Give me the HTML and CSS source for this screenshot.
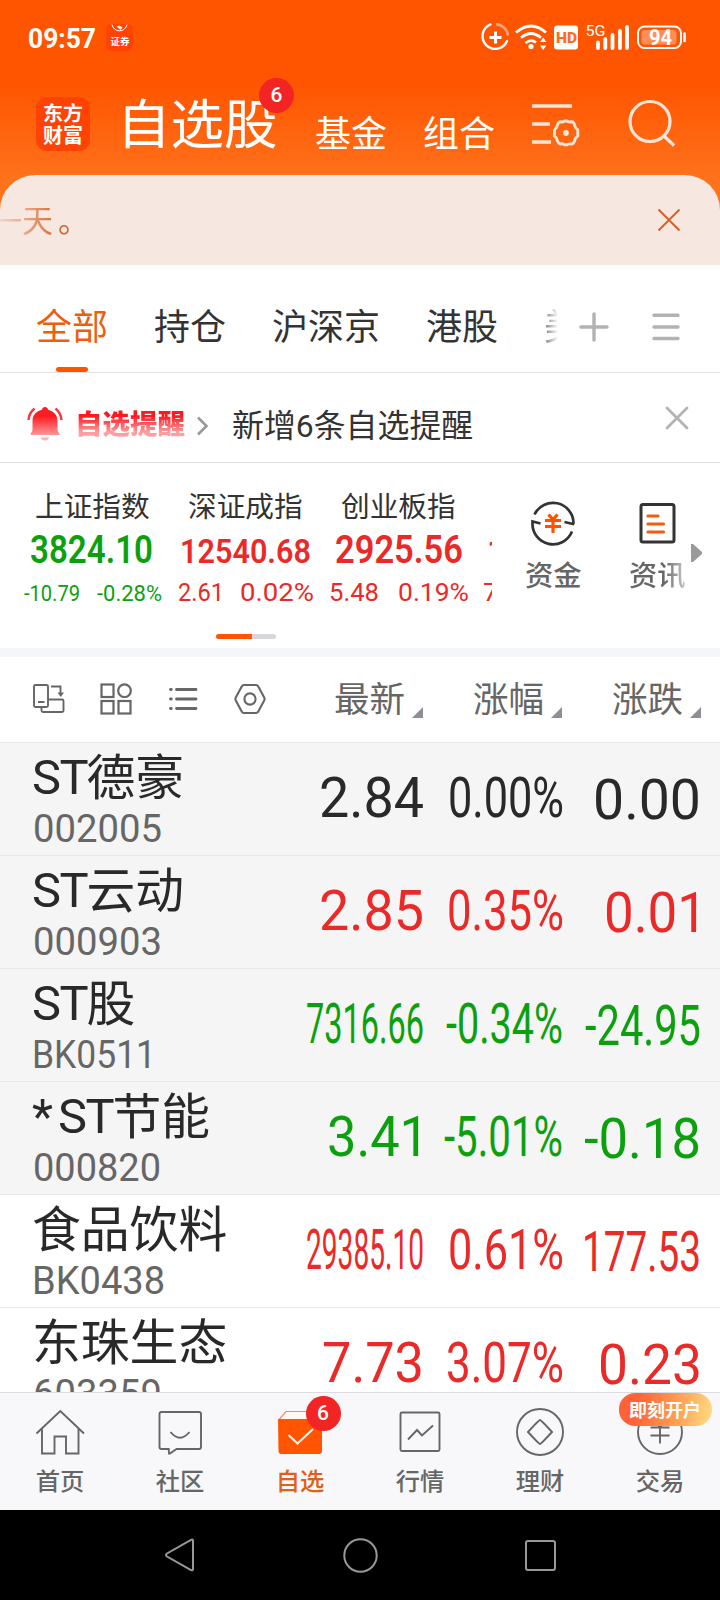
FILE: index.html
```html
<!DOCTYPE html>
<html lang="zh-CN">
<head>
<meta charset="utf-8">
<title>自选股</title>
<link rel="stylesheet" href="styles.css">
</head>
<body>
<div class="phone">
  <header class="top">
    <div class="status">
      <svg class="clock" width="70" height="28"><text x="0" y="24" textLength="68" lengthAdjust="spacingAndGlyphs">09:57</text></svg>
      <svg class="app-note" width="28" height="28" viewBox="0 0 28 28"><rect width="27" height="27" rx="5.5" fill="#ff4305"/><path d="M6 0.5a7.6 7.6 0 0 0 15 0" fill="none" stroke="#fff" stroke-width="1"/><path d="M10.5 2.5l3-1 3 2-2 2.5z" fill="#ffe7df"/><text x="4.5" y="20.800" font-size="9.5">证券</text></svg>
      <svg class="sys" width="210" height="32" viewBox="0 0 210 32" fill="none" stroke="#fff">
        <path d="M10.5 2.4A12.7 12.7 0 1 0 27 19" stroke-width="2.4" stroke-linecap="round"/>
        <path d="M16 2.2A12.700 12.700 0 0 1 28 13.500" stroke="#ffa780" stroke-width="2.4"/>
        <path d="M15.500 9.500v12M9.500 15.500h12" stroke-width="3"/>
        <path d="M36 10.500q15-13 30 0M41 15.800q10-8.500 20 0M45.500 21q5.500-4.500 10.500-.5" stroke-width="2.8"/>
        <circle cx="51" cy="24.500" r="2.6" fill="#fff" stroke="none"/>
        <path d="M60 20l3.200-4.500 3.200 4.500zM60 23.500h6.400l-3.200 4.500z" fill="#fff" stroke="none"/>
        <rect x="74" y="3.500" width="24" height="24" rx="3" fill="#fff" stroke="none"/>
        <text x="76" y="20.500" class="hd" textLength="21" lengthAdjust="spacingAndGlyphs">HD</text>
        <text x="105.500" y="13.500" class="five" textLength="20" lengthAdjust="spacingAndGlyphs">5G</text>
        <path d="M118 20.500v5.500M125.300 17v9M132.500 13v13M140 9v17M147 5v21" stroke-width="3.800" stroke-linecap="round"/>
        <rect x="158" y="4.500" width="43" height="21.500" rx="6.500" stroke-width="2"/>
        <rect x="161.500" y="8" width="35" height="14.500" rx="3" fill="#ff8d57" stroke="none"/>
        <path d="M204.500 11.500v7.500" stroke-width="2.600" stroke-linecap="round"/>
        <text x="169" y="22.500" class="bat" textLength="23" lengthAdjust="spacingAndGlyphs">94</text>
      </svg>
    </div>
    <div class="head">
      <div class="logo"><span>东方</span><span>财富</span></div>
      <h1 class="title">自选股<b class="badge">6</b></h1>
      <a class="link fund">基金</a>
      <a class="link group">组合</a>
      <svg class="manage" width="48" height="44" viewBox="0 0 48 44" fill="none" stroke="#ffe5d6"><path d="M0 3h40M0 21h18M0 39h19" stroke-width="3.400"/><path d="M28.500 18.800q3 .5 3.800-.8h3q.8 1.300 4.500.8 2 0 3 3.800 0 2.200 3 4.400v6q-3 2-3 4.400-1 3.300-3 3.600-3.700-.6-4.500.8h-3q-.8-1.400-3.800-.8-2.200-.3-3.300-3.600 0-2.400-2.700-4.400v-6q2.700-2.200 2.700-4.400 1.100-3.800 3.300-3.800z" stroke-width="2.900" stroke-linejoin="round"/><circle cx="34" cy="30" r="2.900" fill="#ffe5d6" stroke="none"/></svg>
      <svg class="search" width="48" height="50" viewBox="0 0 48 50" fill="none" stroke="#ffe5d6" stroke-width="3.200"><circle cx="22" cy="22.500" r="20"/><path d="M36 37l10 9.500"/></svg>
    </div>
  </header>

  <section class="notice">
    <p class="notice-text">一天<span>。</span></p>
    <svg width="24" height="24" viewBox="0 0 24 24" stroke="#d9602a" stroke-width="2"><path d="M1.500 1.500l21 21M22.500 1.500l-21 21"/></svg>
  </section>

  <nav class="tabs">
    <a class="tab on">全部</a><a class="tab">持仓</a><a class="tab">沪深京</a><a class="tab">港股</a><a class="tab cut">美股</a>
    <svg class="plus" width="30" height="30" viewBox="0 0 30 30" stroke="#b2b2b2" stroke-width="3.400" stroke-linecap="round"><path d="M15 2v26M2 15h26"/></svg>
    <svg class="menu" width="28" height="30" viewBox="0 0 28 30" stroke="#b2b2b2" stroke-width="3.400" stroke-linecap="round"><path d="M2 3.200h24M2 15h24M2 26.500h24"/></svg>
  </nav>

  <section class="alert">
    <svg class="bell" width="36" height="36" viewBox="0 0 36 36"><defs><linearGradient id="red" x1="0" y1="0" x2="0" y2="34" gradientUnits="userSpaceOnUse"><stop offset=".3" stop-color="#fb1d22"/><stop offset="1" stop-color="#ffb6b8"/></linearGradient></defs><path d="M18 1c2 0 3 1.500 3 2.800 6 1.500 9.500 5.500 9.500 11v8.500c0 2.500 2 3.500 2 5.700h-29c0-2.200 2-3.200 2-5.700v-8.500c0-5.500 3.500-9.500 9.500-11C15 2.500 16 1 18 1zM14 31.500h8c-.5 4-7.500 4-8 0z" fill="url(#red)"/><path d="M1.500 14C1.700 9 4 5.500 7.500 2.500M34.500 14C34.300 9 32 5.500 28.500 2.500" fill="none" stroke="#f43a3e" stroke-width="2.400"/></svg>
    <strong class="alert-title">自选提醒</strong>
    <svg class="chev" width="14" height="20" viewBox="0 0 14 20" fill="none" stroke="#999" stroke-width="2.600"><path d="M2 1.500l8.500 8.500L2 18.500"/></svg>
    <span class="alert-text">新增<i>6</i>条自选提醒</span>
    <svg class="close" width="24" height="24" viewBox="0 0 24 24" stroke="#b3b3b3" stroke-width="2.800" stroke-linecap="round"><path d="M2 2l20 20M22 2L2 22"/></svg>
  </section>

  <section class="indices">
    <div class="index-list">
      <article class="idx down"><h2>上证指数</h2>
        <svg width="153" height="80"><text class="val big" x="12" y="34" textLength="123" lengthAdjust="spacingAndGlyphs">3824.10</text><text class="sm" x="6" y="72" textLength="56" lengthAdjust="spacingAndGlyphs">-10.79</text><text class="sm" x="79" y="72" textLength="65" lengthAdjust="spacingAndGlyphs">-0.28%</text></svg></article>
      <article class="idx up"><h2>深证成指</h2>
        <svg width="153" height="80"><text class="val" x="9" y="33.500" textLength="131" lengthAdjust="spacingAndGlyphs">12540.68</text><text class="md" x="7" y="72" textLength="46" lengthAdjust="spacingAndGlyphs">2.61</text><text class="md" x="69" y="72" textLength="74" lengthAdjust="spacingAndGlyphs">0.02%</text></svg></article>
      <article class="idx up"><h2>创业板指</h2>
        <svg width="153" height="80"><text class="val big" x="11" y="34" textLength="128" lengthAdjust="spacingAndGlyphs">2925.56</text><text class="md" x="5" y="72" textLength="50" lengthAdjust="spacingAndGlyphs">5.48</text><text class="md" x="74" y="72" textLength="71" lengthAdjust="spacingAndGlyphs">0.19%</text></svg></article>
      <article class="idx up"><h2>&nbsp;</h2>
        <svg width="153" height="80"><text class="val" x="10" y="33.500">1</text><text class="md" x="6" y="72">7</text></svg></article>
    </div>
    <div class="tool money">
      <svg width="46" height="46" viewBox="0 0 46 46" fill="none" stroke="#333" stroke-width="2.700"><path d="M4.500 14.500a20.500 20.500 0 0 1 39 8.500l-.5 1-8.500-2M42 31.500A20.500 20.500 0 0 1 2.500 23v-1.500l8 2"/><path d="M18.500 14.500l4.500 5 4.500-5M15 20.500h16M15 26.500h16M23 20v13" stroke="#ff5200" stroke-width="3.200"/></svg>
      <span>资金</span>
    </div>
    <div class="tool news">
      <svg width="46" height="46" viewBox="0 0 46 46" fill="none" stroke="#333" stroke-width="3"><rect x="6" y="4.500" width="33" height="37.500" rx="2"/><path d="M13 16h10M13 24h15.500M13 32h15.500" stroke="#f45b10" stroke-width="3.200" stroke-linecap="round"/></svg>
      <span>资讯</span>
    </div>
    <svg class="more" width="11" height="18" viewBox="0 0 11 18"><path d="M0 0h2l9 8v2l-9 8H0z" fill="#999"/></svg>
  </section>
  <div class="pager"><span></span></div>

  <section class="list-head">
    <svg class="icon" width="34" height="32" viewBox="0 0 34 32" fill="none" stroke="#666" stroke-width="1.900"><rect x="2" y="2" width="14" height="22" rx="1.500"/><path d="M6 19h6.500M19 3.500h9.500v7M9.500 24v3.500q0 1.500 1.500 1.500h19q1.500 0 1.500-1.500V18q0-1.500-1.500-1.500H16"/><path d="M25.500 9.500h6.500l-3.200 4.500z" fill="#666" stroke="none"/></svg>
    <svg class="icon" width="34" height="32" viewBox="0 0 34 32" fill="none" stroke="#666" stroke-width="2.200"><rect x="2.500" y="1.500" width="12" height="12.500"/><circle cx="25.500" cy="7.700" r="6.300"/><rect x="2.500" y="18" width="12" height="12.500"/><rect x="19.500" y="18" width="12" height="12.500"/></svg>
    <svg class="icon" width="34" height="32" viewBox="0 0 34 32" stroke="#666" stroke-width="2.800" stroke-linecap="round"><path d="M10.500 6.500h19.500M10.500 16h19.500M10.500 25.500h19.500M4.500 6.500h.8M4.500 16h.8M4.500 25.500h.8"/></svg>
    <svg class="icon" width="34" height="32" viewBox="0 0 34 32" fill="none" stroke="#666" stroke-width="2.100" stroke-linejoin="round"><path d="M11 2h12q1.500 0 2.300 1.500l5.900 11q.8 1.500 0 3l-5.900 11q-.8 1.500-2.300 1.500h-12q-1.500 0-2.300-1.500l-5.900-11q-.8-1.500 0-3l5.900-11q.8-1.500 2.300-1.500z"/><circle cx="17" cy="16" r="5.600"/></svg>
    <div class="sort">最新<i></i></div><div class="sort">涨幅<i></i></div><div class="sort">涨跌<i></i></div>
  </section>

  <main class="stocks">
    <div class="row hold flat"><div class="who"><b><i>ST</i>德豪</b><svg width="140" height="40"><text x="0" y="35" textLength="129" lengthAdjust="spacingAndGlyphs">002005</text></svg></div>
      <svg class="n" width="138" height="113"><text x="16" y="75" textLength="105" lengthAdjust="spacingAndGlyphs">2.84</text></svg><svg class="n" width="138" height="113"><text x="7" y="75" textLength="116" lengthAdjust="spacingAndGlyphs">0.00%</text></svg><svg class="n" width="141" height="113"><text x="14" y="77" textLength="108" lengthAdjust="spacingAndGlyphs">0.00</text></svg></div>
    <div class="row hold up"><div class="who"><b><i>ST</i>云动</b><svg width="140" height="40"><text x="0" y="35" textLength="129" lengthAdjust="spacingAndGlyphs">000903</text></svg></div>
      <svg class="n" width="138" height="113"><text x="16" y="75" textLength="105" lengthAdjust="spacingAndGlyphs">2.85</text></svg><svg class="n" width="138" height="113"><text x="6" y="75" textLength="117" lengthAdjust="spacingAndGlyphs">0.35%</text></svg><svg class="n" width="141" height="113"><text x="25" y="77" textLength="103" lengthAdjust="spacingAndGlyphs">0.01</text></svg></div>
    <div class="row hold down"><div class="who"><b><i>ST</i>股</b><svg width="140" height="40"><text x="-1" y="35" textLength="124" lengthAdjust="spacingAndGlyphs">BK0511</text></svg></div>
      <svg class="n" width="138" height="113"><text x="3" y="75" textLength="118" lengthAdjust="spacingAndGlyphs">7316.66</text></svg><svg class="n" width="138" height="113"><text x="5" y="75" textLength="117" lengthAdjust="spacingAndGlyphs">-0.34%</text></svg><svg class="n" width="141" height="113"><text x="6" y="77" textLength="116" lengthAdjust="spacingAndGlyphs">-24.95</text></svg></div>
    <div class="row hold down"><div class="who"><b><i class="star">*</i><i>ST</i>节能</b><svg width="140" height="40"><text x="0" y="35" textLength="128" lengthAdjust="spacingAndGlyphs">000820</text></svg></div>
      <svg class="n" width="138" height="113"><text x="24" y="75" textLength="102" lengthAdjust="spacingAndGlyphs">3.41</text></svg><svg class="n" width="138" height="113"><text x="3" y="75" textLength="119" lengthAdjust="spacingAndGlyphs">-5.01%</text></svg><svg class="n" width="141" height="113"><text x="5" y="77" textLength="117" lengthAdjust="spacingAndGlyphs">-0.18</text></svg></div>
    <div class="row up"><div class="who"><b>食品饮料</b><svg width="140" height="40"><text x="-1" y="35" textLength="133" lengthAdjust="spacingAndGlyphs">BK0438</text></svg></div>
      <svg class="n" width="138" height="113"><text x="3" y="75" textLength="118" lengthAdjust="spacingAndGlyphs">29385.10</text></svg><svg class="n" width="138" height="113"><text x="7" y="75" textLength="116" lengthAdjust="spacingAndGlyphs">0.61%</text></svg><svg class="n" width="141" height="113"><text x="3" y="77" textLength="119" lengthAdjust="spacingAndGlyphs">177.53</text></svg></div>
    <div class="row up"><div class="who"><b>东珠生态</b><svg width="140" height="40"><text x="0" y="35" textLength="129" lengthAdjust="spacingAndGlyphs">603359</text></svg></div>
      <svg class="n" width="138" height="113"><text x="19" y="75" textLength="102" lengthAdjust="spacingAndGlyphs">7.73</text></svg><svg class="n" width="138" height="113"><text x="5" y="75" textLength="118" lengthAdjust="spacingAndGlyphs">3.07%</text></svg><svg class="n" width="141" height="113"><text x="19" y="77" textLength="104" lengthAdjust="spacingAndGlyphs">0.23</text></svg></div>
  </main>

  <nav class="bottom">
    <a><svg width="50" height="50" viewBox="0 0 50 50"><path d="M1.500 24.500L25.300 2 49 24.500M7 20v24.500h12.500V27.500H31v17h12.500V20"/></svg>首页</a>
    <a><svg width="50" height="50" viewBox="0 0 50 50"><path d="M6.500 3h37.500q2 0 2 2v33q0 2-2 2H21.500L15 44.500h-1l-.3-4.500H6.500q-2 0-2-2V5q0-2 2-2zM15.500 23q9.500 11.500 19 0"/></svg>社区</a>
    <a class="on"><svg width="50" height="50" viewBox="0 0 50 50"><path d="M4.500 11v-1L11 2.500h34l1.500 8.500z" fill="#fff8f3" stroke="#ff8a50" stroke-width="1.200"/><path d="M3 10h44v32q0 3-3 3H6.500q-3 0-3-3z" fill="#ff5400" stroke="none"/><path d="M13.500 26l9 8.500L38 20" stroke="#fff3e9" stroke-width="2.200"/></svg>自选<b class="badge">6</b></a>
    <a><svg width="50" height="50" viewBox="0 0 50 50"><rect x="5.500" y="3.500" width="39" height="38.500" rx="1.500"/><path d="M13 30.500l9-9.500 5 5.500L38 16.500"/></svg>行情</a>
    <a><svg width="50" height="50" viewBox="0 0 50 50"><circle cx="25" cy="23" r="23"/><path d="M25 11q1 0 12 12-11 12-12 12T13 23Q24 11 25 11z"/></svg>理财</a>
    <a><svg width="50" height="50" viewBox="0 0 50 50"><circle cx="25" cy="23" r="22"/><path d="M18 9l7 9.500L32 9M15.500 18.500h19M15.500 26.500h19M25 18.500v16"/></svg>交易<em class="promo">即刻开户</em></a>
  </nav>

  <footer class="keys">
    <svg width="36" height="36" viewBox="0 0 36 36"><path d="M31 4v28q0 2-2 1L5 19.500Q3 18 5 16.500L29 2.800Q31 1.800 31 4z"/></svg>
    <svg width="36" height="36" viewBox="0 0 36 36"><circle cx="18.500" cy="18.500" r="16.200"/></svg>
    <svg width="36" height="36" viewBox="0 0 36 36"><rect x="4" y="4" width="29" height="29" rx="2"/></svg>
  </footer>
</div>
</body>
</html>
```

FILE: styles.css
```css
* { box-sizing: border-box; }
body {
  margin: 0;
  background: #fff;
  color: #333;
  font-family: "Noto Sans CJK SC", sans-serif;
}
h1, h2, p { margin: 0; font-weight: 400; }
i, em { font-style: normal; }
svg { display: block; flex: none; overflow: visible; }
svg text { font-family: Roboto, sans-serif; stroke: none; }
.phone {
  width: 720px;
  height: 1600px;
  overflow: hidden;
  display: flex;
  flex-direction: column;
  background: linear-gradient(#ff5500 0, #ff5500 84px, #ff721c 180px, #ff721c 220px, #fff 221px);
}

/* status bar and title bar */
.top { height: 175px; flex: none; }
.status { height: 80px; padding: 24px 0 0 28px; display: flex; }
.clock { fill: #fff; font-size: 28.500px; font-weight: 700; }
.app-note { margin: 0 0 0 8px; }
.app-note text { fill: #fff; font-family: "Noto Sans CJK SC", sans-serif; font-weight: 700; }
.sys { margin: -2px 0 0 346px; }
.sys .hd { fill: #ff6a20; font-size: 14.500px; font-weight: 900; }
.sys .five { fill: #fff; font-size: 15px; }
.sys .bat { fill: #fff; font-size: 22px; font-weight: 700; }
.head { height: 95px; padding-left: 36px; display: flex; align-items: flex-start; color: #fff; }
.logo {
  width: 54px;
  height: 54px;
  margin-top: 17px;
  padding-top: 5px;
  border-radius: 11px;
  background: #ff4305;
  font-size: 20px;
  font-weight: 700;
  line-height: 22px;
  text-align: center;
}
.logo span { display: block; }
.title {
  position: relative;
  width: 162px;
  margin: 6px 0 0 27px;
  font-size: 53.500px;
  line-height: 70px;
  white-space: nowrap;
}
.badge {
  position: absolute;
  width: 35px;
  height: 35px;
  border-radius: 50%;
  background: #f32424;
  color: #fff;
  font: 500 21px/35px Roboto, sans-serif;
  text-align: center;
}
.title .badge { left: 142px; top: -8px; }
.link { margin-top: 29px; font-size: 36px; line-height: 44px; width: 72px; }
.fund { margin-left: 36px; }
.group { margin-left: 36px; }
.manage { margin: 23px 0 0 37px; }
.search { margin: 19px 0 0 48px; }

.notice {
  height: 90px;
  flex: none;
  display: flex;
  align-items: center;
  justify-content: space-between;
  padding: 0 39px 0 0;
  background: #f6e7e0;
  border-radius: 35px 35px 0 0;
}
.notice-text {
  margin: -4px 0 0 -9px;
  font-size: 31px;
  color: transparent;
  background: linear-gradient(90deg, rgba(212,98,40,.1) 8px, #d46228 70px);
  -webkit-background-clip: text;
  background-clip: text;
}
.notice-text span { margin-left: 5px; }

/* group tabs */
.tabs {
  height: 108px;
  flex: none;
  display: flex;
  padding: 0 0 0 36px;
  align-items: flex-start;
  background: #fff;
  border-bottom: 1px solid #e2e2e2;
}
.tab { position: relative; margin-right: 46px; padding-top: 34px; height: 107px; font-size: 36px; line-height: 50px; }
.tab.on { color: #e9600f; }
.tab.on::after {
  content: "";
  position: absolute;
  left: 20px;
  bottom: 0;
  width: 32px;
  height: 5px;
  border-radius: 2.500px;
  background: #ff5400;
}
.tab.cut {
  width: 15px;
  margin: 0;
  overflow: hidden;
  white-space: nowrap;
  color: transparent;
  background: linear-gradient(90deg, #777, #fff 14px);
  -webkit-background-clip: text;
  background-clip: text;
}
.plus { margin: 47px 0 0 20px; }
.menu { margin: 47px 0 0 43px; }

/* reminder strip */
.alert { height: 90px; flex: none; padding-left: 27px; display: flex; align-items: center; background: #fff; border-bottom: 1px solid #e2e2e2; }
.bell { margin-top: 13px; }
.alert-title {
  margin: 9px 0 0 12px;
  width: 110px;
  font-size: 27.500px;
  font-weight: 900;
  white-space: nowrap;
  color: transparent;
  background: linear-gradient(#fa1a20 35%, #ff9da0 75%);
  -webkit-background-clip: text;
  background-clip: text;
}
.chev { margin: 16px 0 0 11px; }
.alert-text { margin: 11px 0 0 22px; font-size: 31.900px; white-space: nowrap; width: 245px; }
.alert-text i { font-family: Roboto, sans-serif; }
.close { margin: 0 0 0 188px; }

/* market indices */
.indices { height: 166px; flex: none; display: flex; background: #fff; }
.index-list { width: 492px; padding: 20px 0 0 18px; display: flex; overflow: hidden; }
.idx { width: 153px; flex: none; }
.idx h2 { font-size: 28.700px; line-height: 44px; height: 44px; padding-left: 17px; white-space: nowrap; }
.val { font-size: 34px; font-weight: 600; }
.val.big { font-size: 38px; }
.sm { font-size: 22px; }
.md { font-size: 26.500px; }
.idx svg { margin-top: 2px; }
.up svg { fill: #e92a28; }
.down svg { fill: #0ca00f; }
.flat svg { fill: #292929; }
.tool { padding-top: 37px; font-size: 28.300px; font-weight: 500; line-height: 40px; color: #666; }
.tool span { display: block; margin-top: 8px; }
.tool svg { margin-left: 5px; }
.money { margin-left: 33px; width: 104px; }
.news { width: 57px; }
.news svg { margin-left: 6px; }
.news span {
  color: transparent;
  background: linear-gradient(90deg, #666 35px, #ccc 57px);
  -webkit-background-clip: text;
  background-clip: text;
}
.more { margin: 81px 0 0 5px; }
.pager { height: 28px; flex: none; padding: 5px 0 0 216px; background: #fff; border-bottom: 9px solid #f5f6fa; }
.pager span { display: block; width: 60px; height: 5px; border-radius: 3px; background: linear-gradient(90deg, #ff5400 36px, #d5d7dd 36px); }

/* column header */
.list-head { height: 85px; flex: none; padding-left: 32px; display: flex; background: #fff; }
.icon { margin: 26px 33px 0 0; }
.sort { position: relative; flex: none; width: 139px; padding: 15px 0 0; font-size: 35.500px; line-height: 50px; color: #666; }
.icon + .sort { margin-left: 34px; }
.sort i { position: absolute; left: 78px; top: 50px; border-left: 11px solid transparent; border-bottom: 11px solid #8e8f96; }

/* stock rows */
.stocks { height: 650px; flex: none; overflow: hidden; background: #fff; }
.row { height: 113px; display: flex; border-top: 1px solid #e9e9e9; }
.hold { background: #f5f5f5; }
.row .n { font-size: 56px; margin-top: -1px; }
.who { width: 303px; padding: 1px 0 0 33px; flex: none; }
.who b { display: flex; font-weight: 400; font-size: 48.800px; line-height: 60px; height: 60px; margin-left: -1px; color: #292929; white-space: nowrap; }
.who b i { width: 54.500px; font-family: Roboto, sans-serif; letter-spacing: -1.500px; padding-top: 4px; }
.who b .star { width: 26px; }
.who svg { fill: #666; font-size: 39px; margin-top: 3px; }

/* app navigation */
.bottom { height: 118px; flex: none; display: grid; grid-template-columns: repeat(6, 120px); background: #f8f8fb; border-top: 1px solid #dcdcdf; }
.bottom a { position: relative; padding-top: 16px; text-align: center; font-size: 24.300px; font-weight: 500; line-height: 34px; color: #666; }
.bottom svg { margin: 0 auto 4px; fill: none; stroke: #666; stroke-width: 1.900; }
.bottom .on { color: #e06015; }
.bottom .badge { left: 65.500px; top: 3px; }
.promo {
  position: absolute;
  left: 18.500px;
  top: 0;
  width: 93px;
  height: 33px;
  border-radius: 16px;
  background: linear-gradient(100deg, #ff6237 20%, #ffa355 65%, #ffdf86);
  color: #fff;
  font-size: 18px;
  font-weight: 700;
  line-height: 33px;
  text-align: center;
}

.keys { height: 90px; flex: none; padding-top: 27px; display: flex; justify-content: center; gap: 144px; background: #000; }
.keys svg { fill: none; stroke: #999; stroke-width: 2; }
```
